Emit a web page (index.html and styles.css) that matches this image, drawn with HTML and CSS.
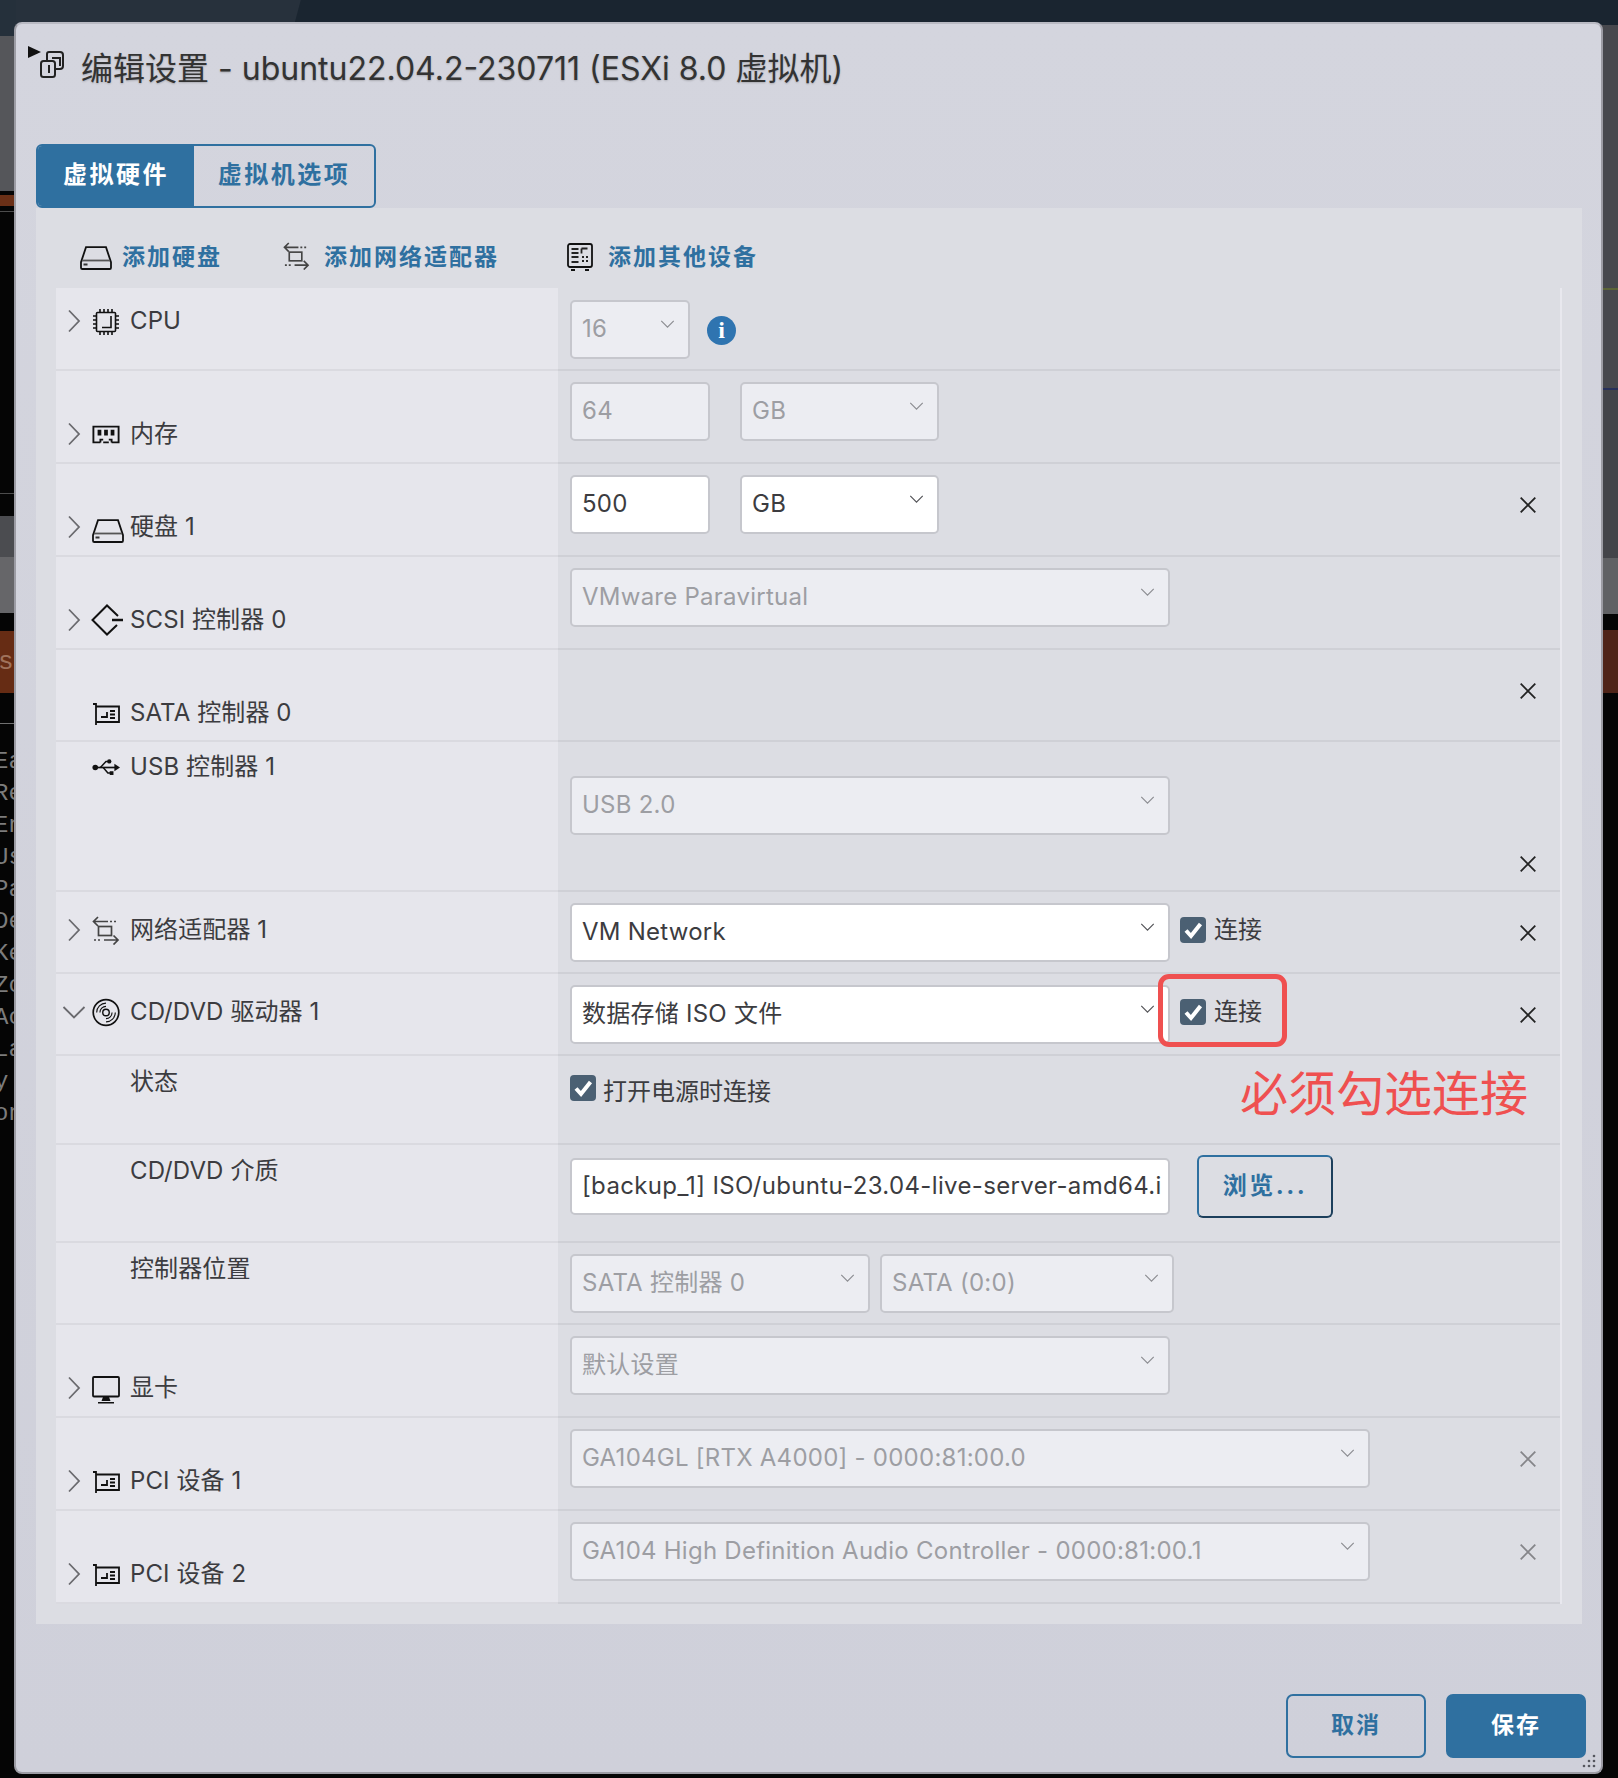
FILE: index.html
```html
<!DOCTYPE html>
<html lang="zh">
<head>
  <meta charset="UTF-8" />
  <title>编辑设置</title>
  <link rel="stylesheet" href="styles.css">
</head>
<body>
  <svg class="defs" width="0" height="0">
    <symbol id="chev-r" viewBox="0 0 14 24"><path d="M2 1.5 12 12 2 22.500" fill="none" stroke="#6a6a6e" stroke-width="1.800"/></symbol>
    <symbol id="chev-d" viewBox="0 0 24 14"><path d="M1.500 2 12 12.500 22.500 2" fill="none" stroke="#6a6a6e" stroke-width="1.800"/></symbol>
    <symbol id="drop" viewBox="0 0 16 9"><path d="M1 1 8 8 15 1" fill="none" stroke="currentColor" stroke-width="1.400"/></symbol>
    <symbol id="close" viewBox="0 0 16 16"><path d="M.7.7 15.300 15.300M15.300.7.7 15.300" fill="none" stroke="currentColor" stroke-width="1.800"/></symbol>
    <symbol id="i-disk" viewBox="0 0 32 24" preserveAspectRatio="none"><path d="M6 1.200h20l5 15v5.500a1.300 1.300 0 0 1-1.300 1.300H2.300A1.300 1.300 0 0 1 1 21.700v-5.500z" fill="none" stroke="#111" stroke-width="1.800"/><path d="M2 14.500h28" stroke="#555" stroke-width="1.800"/><path d="M3.500 18.500h4" stroke="#333" stroke-width="2"/></symbol>
    <symbol id="i-net" viewBox="0 0 28 29"><g fill="none" stroke="#444" stroke-width="1.700"><path d="M2 5.500h14M6 1 1.500 5.500 6 10"/><path d="M18 5.500h6" stroke-dasharray="2 2"/><rect x="6.500" y="10.500" width="13" height="9"/><path d="M12 24h14M21.500 19.500 26 24l-4.500 4.500"/><path d="M2 24h8" stroke-dasharray="2 2"/></g></symbol>
    <symbol id="i-other" viewBox="0 0 26 28"><rect x="1" y="1" width="24" height="23" rx="2" fill="none" stroke="#111" stroke-width="1.800"/><path d="M4 27h4M18 27h4" stroke="#111" stroke-width="2"/><path d="M4.500 6h7M4.500 10h7M4.500 14h7M4.500 19h7M14.500 5.500h6M14.500 5.500v5" stroke="#222" stroke-width="1.800" fill="none"/><path d="M15 14h2M19 14h2M15 18h2M19 18h2" stroke="#222" stroke-width="2"/></symbol>
    <symbol id="i-cpu" viewBox="0 0 28 28"><g fill="none" stroke="#111" stroke-width="1.600"><rect x="4.500" y="4.500" width="19" height="19" rx="1"/><path d="M19 8v11.500H10"/><path d="M8 1v3M12 1v3M16 1v3M20 1v3M8 24v3M12 24v3M16 24v3M20 24v3M1 8h3M1 12h3M1 16h3M1 20h3M24 8h3M24 12h3M24 16h3M24 20h3"/></g></symbol>
    <symbol id="i-mem" viewBox="0 0 30 20"><g fill="none" stroke="#111" stroke-width="2"><path d="M9 18.500H1.500V1.500h27v17H21M12 18.500h6"/><path d="M21 18.500v-3h-3M9 18.500v-3h3"/></g><path d="M6 5h4v6H6zM13 5h4v6h-4zM20 5h4v6h-4z" fill="#111"/></symbol>
    <symbol id="i-scsi" viewBox="0 0 32 32"><path d="M27 12 16 1.500 1.500 16 16 30.500 26 21" fill="none" stroke="#111" stroke-width="2"/><path d="M21 16h11" stroke="#111" stroke-width="2.500"/></symbol>
    <symbol id="i-card" viewBox="0 0 28 24"><g fill="none" stroke="#111" stroke-width="1.800"><path d="M1 2h3v21"/><path d="M4 4.500h23v15.500H4"/><path d="M9 15h6v-5M18 9h5M18 12.500h5M18 16h5"/></g></symbol>
    <symbol id="i-usb" viewBox="0 0 30 20"><path d="M2 10h24" stroke="#111" stroke-width="1.800"/><circle cx="3.500" cy="10" r="3" fill="#111"/><path d="M24 6l6 4-6 4z" fill="#111"/><path d="M9 10l6-6.500h3M12 10l5 6h3" fill="none" stroke="#111" stroke-width="1.600"/><circle cx="18.500" cy="3.500" r="2.300" fill="#111"/><rect x="19" y="14" width="4" height="4" fill="#111"/></symbol>
    <symbol id="i-disc" viewBox="0 0 30 30"><g fill="none" stroke="#111"><circle cx="15" cy="15" r="13.700" stroke-width="1.800"/><circle cx="15" cy="15" r="3.500" stroke-width="1.500"/><path d="M5 15A10 10 0 0 1 15 5M8.500 15A6.500 6.500 0 0 1 15 8.500M25 15A10 10 0 0 1 15 25M21.500 15A6.500 6.500 0 0 1 15 21.500" stroke-width="1.200"/></g></symbol>
    <symbol id="i-screen" viewBox="0 0 28 28"><rect x="1" y="1" width="26" height="19.500" rx="1" fill="none" stroke="#111" stroke-width="1.800"/><path d="M11 21h6l1.500 4h-9z" fill="#111"/><path d="M6 26h16v1.500H6z" fill="#111"/></symbol>
  </svg>

  <div class="backdrop">
    <div class="top-band"></div>
    <div class="strip strip-left">
      <div class="b-top-left"></div>
      <div class="b-grey"></div>
      <div class="b-brown-thin"></div>
      <div class="b-line b-line-a"></div>
      <div class="b-line b-line-b"></div>
      <div class="b-grey-dark"></div>
      <div class="b-grey-light"></div>
      <div class="b-brown">sy</div>
      <div class="b-line b-line-c"></div>
      <pre class="b-term">Ea
Re
En
Us
Pa
De
Ke
Zo
Ac
La
y
on</pre>
    </div>
    <div class="strip strip-right">
      <div class="r-top"></div>
      <div class="r-panel"></div>
      <div class="r-mark r-green"></div>
      <div class="r-panel r-panel-b"></div>
      <div class="r-mark r-blue"></div>
      <div class="r-panel r-panel-c"></div>
      <div class="r-light"></div>
      <div class="r-brown"></div>
    </div>
  </div>

  <div class="dialog">
    <div class="marker"></div>
    <div class="dialog-head">
      <svg class="head-icon" viewBox="0 0 24 27"><g fill="none" stroke="#222" stroke-width="2"><path d="M7 10V3a2 2 0 0 1 2-2h11v0a3 3 0 0 1 3 3v11a3 3 0 0 1-3 3h-6"/><rect x="1" y="10" width="14" height="16" rx="2.500"/><path d="M12 7h8v8"/><path d="M9 14v8"/></g></svg>
      <h1>编辑设置 - ubuntu22.04.2-230711 (ESXi 8.0 虚拟机)</h1>
    </div>

    <div class="tabs">
      <div class="tab tab-active">虚拟硬件</div>
      <div class="tab">虚拟机选项</div>
    </div>

    <div class="panel">
      <div class="actions">
        <a class="action action-disk"><svg class="a-disk" width="32" height="24"><use href="#i-disk"/></svg>添加硬盘</a>
        <a class="action action-net"><svg class="a-net" width="29" height="28"><use href="#i-net"/></svg>添加网络适配器</a>
        <a class="action action-other"><svg class="a-other" width="26" height="28"><use href="#i-other"/></svg>添加其他设备</a>
      </div>

      <div class="table">
        <div class="row">
          <div class="label label-top"><span class="chev"><svg width="14" height="24"><use href="#chev-r"/></svg></span><svg class="icon ic-cpu"><use href="#i-cpu"/></svg>CPU</div>
          <div class="value value-cpu">
            <div class="field off w-cpu"><span>16</span><svg class="drop" width="15" height="8"><use href="#drop"/></svg></div>
            <span class="info">i</span>
          </div>
        </div>

        <div class="row">
          <div class="label label-low"><span class="chev"><svg width="14" height="24"><use href="#chev-r"/></svg></span><svg class="icon ic-mem"><use href="#i-mem"/></svg>内存</div>
          <div class="value tall">
            <div class="field off w-num"><span>64</span></div>
            <div class="field off w-unit"><span>GB</span><svg class="drop" width="15" height="8"><use href="#drop"/></svg></div>
          </div>
        </div>

        <div class="row">
          <div class="label label-low"><span class="chev"><svg width="14" height="24"><use href="#chev-r"/></svg></span><svg class="icon ic-disk"><use href="#i-disk"/></svg>硬盘 1</div>
          <div class="value tall">
            <div class="field w-num"><span>500</span></div>
            <div class="field w-unit"><span>GB</span><svg class="drop" width="15" height="8"><use href="#drop"/></svg></div>
            <svg class="close" width="16" height="16"><use href="#close"/></svg>
          </div>
        </div>

        <div class="row">
          <div class="label label-low"><span class="chev"><svg width="14" height="24"><use href="#chev-r"/></svg></span><svg class="icon ic-scsi"><use href="#i-scsi"/></svg>SCSI 控制器 0</div>
          <div class="value tall">
            <div class="field off w-wide"><span>VMware Paravirtual</span><svg class="drop" width="15" height="8"><use href="#drop"/></svg></div>
          </div>
        </div>

        <div class="row">
          <div class="label label-low"><span class="chev"></span><svg class="icon ic-card"><use href="#i-card"/></svg>SATA 控制器 0</div>
          <div class="value tall value-empty">
            <svg class="close" width="16" height="16"><use href="#close"/></svg>
          </div>
        </div>

        <div class="row">
          <div class="label label-usb"><span class="chev"></span><svg class="icon ic-usb"><use href="#i-usb"/></svg>USB 控制器 1</div>
          <div class="value value-usb">
            <div class="field off w-wide field-usb"><span>USB 2.0</span><svg class="drop" width="15" height="8"><use href="#drop"/></svg></div>
            <svg class="close close-low" width="16" height="16"><use href="#close"/></svg>
          </div>
        </div>

        <div class="row">
          <div class="label label-mid"><span class="chev"><svg width="14" height="24"><use href="#chev-r"/></svg></span><svg class="icon ic-net"><use href="#i-net"/></svg>网络适配器 1</div>
          <div class="value">
            <div class="field w-wide"><span>VM Network</span><svg class="drop" width="15" height="8"><use href="#drop"/></svg></div>
            <label class="check check-row"><span class="box"><svg width="26" height="26" viewBox="0 0 26 26"><path d="M6 13.500 11 19 20.500 7" fill="none" stroke="#fff" stroke-width="4"/></svg></span>连接</label>
            <svg class="close" width="16" height="16"><use href="#close"/></svg>
          </div>
        </div>

        <div class="row">
          <div class="label label-mid"><span class="chev"><svg width="24" height="14"><use href="#chev-d"/></svg></span><svg class="icon ic-disc"><use href="#i-disc"/></svg>CD/DVD 驱动器 1</div>
          <div class="value">
            <div class="field w-wide"><span>数据存储 ISO 文件</span><svg class="drop" width="15" height="8"><use href="#drop"/></svg></div>
            <label class="check check-row"><span class="box"><svg width="26" height="26" viewBox="0 0 26 26"><path d="M6 13.500 11 19 20.500 7" fill="none" stroke="#fff" stroke-width="4"/></svg></span>连接</label>
            <svg class="close" width="16" height="16"><use href="#close"/></svg>
          </div>
        </div>

        <div class="row">
          <div class="label label-sub">状态</div>
          <div class="value value-status">
            <label class="check check-power"><span class="box"><svg width="26" height="26" viewBox="0 0 26 26"><path d="M6 13.500 11 19 20.500 7" fill="none" stroke="#fff" stroke-width="4"/></svg></span><span class="check-text">打开电源时连接</span></label>
          </div>
        </div>

        <div class="row">
          <div class="label label-sub">CD/DVD 介质</div>
          <div class="value value-iso">
            <div class="field w-wide field-iso"><span>[backup_1] ISO/ubuntu-23.04-live-server-amd64.i</span></div>
            <button class="btn-browse">浏览...</button>
          </div>
        </div>

        <div class="row">
          <div class="label label-sub">控制器位置</div>
          <div class="value">
            <div class="field off w-half"><span>SATA 控制器 0</span><svg class="drop" width="15" height="8"><use href="#drop"/></svg></div>
            <div class="field off w-half2"><span>SATA (0:0)</span><svg class="drop" width="15" height="8"><use href="#drop"/></svg></div>
          </div>
        </div>

        <div class="row">
          <div class="label label-low"><span class="chev"><svg width="14" height="24"><use href="#chev-r"/></svg></span><svg class="icon ic-screen"><use href="#i-screen"/></svg>显卡</div>
          <div class="value tall">
            <div class="field off w-wide"><span>默认设置</span><svg class="drop" width="15" height="8"><use href="#drop"/></svg></div>
          </div>
        </div>

        <div class="row">
          <div class="label label-low"><span class="chev"><svg width="14" height="24"><use href="#chev-r"/></svg></span><svg class="icon ic-card"><use href="#i-card"/></svg>PCI 设备 1</div>
          <div class="value tall">
            <div class="field off w-long"><span>GA104GL [RTX A4000] - 0000:81:00.0</span><svg class="drop" width="15" height="8"><use href="#drop"/></svg></div>
            <svg class="close close-off" width="16" height="16"><use href="#close"/></svg>
          </div>
        </div>

        <div class="row">
          <div class="label label-low"><span class="chev"><svg width="14" height="24"><use href="#chev-r"/></svg></span><svg class="icon ic-card"><use href="#i-card"/></svg>PCI 设备 2</div>
          <div class="value tall">
            <div class="field off w-long"><span>GA104 High Definition Audio Controller - 0000:81:00.1</span><svg class="drop" width="15" height="8"><use href="#drop"/></svg></div>
            <svg class="close close-off" width="16" height="16"><use href="#close"/></svg>
          </div>
        </div>
      </div>
    </div>

    <div class="dialog-foot">
      <button class="btn">取消</button>
      <button class="btn btn-primary">保存</button>
    </div>
    <svg class="grip" width="14" height="14" viewBox="0 0 14 14"><g fill="#55565e"><circle cx="12" cy="2" r="1.300"/><circle cx="7" cy="7" r="1.300"/><circle cx="12" cy="7" r="1.300"/><circle cx="2" cy="12" r="1.300"/><circle cx="7" cy="12" r="1.300"/><circle cx="12" cy="12" r="1.300"/></g></svg>

    <div class="note-box"></div>
    <div class="note-text">必须勾选连接</div>
  </div>
</body>
</html>
```

FILE: styles.css
```css
* {
  box-sizing: border-box;
}

html, body {
  height: 100%;
}

body {
  margin: 0;
  background: #050505;
  font-family: "Inter", "Noto Sans CJK SC", sans-serif;
  color: #3c3c40;
  overflow: hidden;
  position: relative;
}

.defs {
  position: absolute;
}

/* what shows round the dialog */
.backdrop {
  position: absolute;
  inset: 0;
  background: #050505;
}

.top-band {
  height: 25px;
  background: linear-gradient(105deg, #27313c 0 290px, #1a2530 291px);
}

.strip {
  position: absolute;
  top: 0;
  overflow: hidden;
}

.strip-left {
  left: 0;
  width: 16px;
  height: 1140px;
}

.strip-right {
  right: 0;
  width: 20px;
  height: 700px;
}

.b-top-left {
  height: 36px;
  background: #25303b;
}

.b-grey {
  height: 155px;
  background: #55565a;
}

.b-brown-thin {
  height: 11px;
  margin-top: 4px;
  background: #6b3017;
}

.b-line {
  height: 1px;
  background: #4c4c4c;
}

.b-line-a {
  margin-top: 5px;
}

.b-line-b {
  margin-top: 281px;
}

.b-grey-dark {
  height: 41px;
  margin-top: 22px;
  background: #4b4c50;
}

.b-grey-light {
  height: 56px;
  background: #666669;
}

.b-brown {
  height: 62px;
  margin-top: 18px;
  background: #662c14;
  color: #a0735c;
  font: 26px/62px "Liberation Mono", monospace;
  text-indent: -2px;
}

.b-line-c {
  margin-top: 30px;
  background: #707070;
}

.b-term {
  margin: 22px 0 0 -6px;
  font: 24px/32px "Liberation Mono", monospace;
  color: #7c7c7c;
}

.r-top {
  height: 25px;
  background: #1a2530;
}

.r-panel {
  height: 263px;
  background: #47484d;
}

.r-panel-b {
  height: 98px;
}

.r-panel-c {
  height: 168px;
  background: #434449;
}

.r-mark {
  height: 2px;
}

.r-green {
  background: #5c6437;
}

.r-blue {
  background: #27305a;
}

.r-light {
  height: 56px;
  background: #606164;
}

.r-brown {
  height: 63px;
  margin-top: 16px;
  background: #4f2418;
}

.dialog {
  position: absolute;
  left: 14px;
  top: 22px;
  width: 1589px;
  height: 1752px;
  border: 2px solid #9c9ca4;
  border-top-color: #b9bac3;
  border-radius: 8px;
  background: linear-gradient(#d4d5de, #cfd0da);
}

.dialog-head {
  height: 120px;
  padding: 27px 0 0 24px;
  display: flex;
  align-items: flex-start;
  gap: 17px;
}

.marker {
  position: absolute;
  left: 12px;
  top: 22px;
  border-left: 13px solid #111;
  border-top: 6.500px solid transparent;
  border-bottom: 6.500px solid transparent;
}

.head-icon {
  width: 24px;
  height: 27px;
}

h1 {
  margin: 0;
  font-size: 32px;
  font-weight: 400;
  line-height: 36px;
  color: #333;
  text-shadow: 0 1px 2px rgba(0, 0, 0, 0.2);
  white-space: nowrap;
}

.tabs {
  display: flex;
  width: 340px;
  height: 64px;
  margin-left: 20px;
  border: 2px solid #2f70a0;
  border-radius: 6px;
  overflow: hidden;
}

.tab {
  flex: 1;
  font-size: 24px;
  font-weight: 700;
  letter-spacing: 2.500px;
  line-height: 58px;
  text-align: center;
  color: #2f70a0;
}

.tab-active {
  flex: 0 0 156px;
  background: #2f70a0;
  color: #fff;
}

.panel {
  width: 1546px;
  height: 1416px;
  margin-left: 20px;
  background: #dcdde3;
  padding: 0 22px 0 20px;
}

.actions {
  height: 80px;
  display: flex;
  align-items: flex-start;
  padding-top: 33px;
}

.action {
  display: flex;
  align-items: center;
  gap: 10px;
  height: 28px;
  font-size: 23px;
  font-weight: 700;
  letter-spacing: 2px;
  color: #2f70a0;
  white-space: nowrap;
}

.a-disk {
  margin-top: 6px;
}

.a-net {
  margin-top: 1px;
}

.a-other {
  margin-top: 3px;
}

.action-disk {
  margin-left: 24px;
}

.action-net {
  margin-left: 60px;
  gap: 13px;
}

.action-other {
  margin-left: 68px;
  gap: 15px;
}

.table {
  width: 1506px;
  border-right: 2px solid #e8e8ee;
}

.row {
  display: grid;
  grid-template-columns: 502px 1fr;
}

.label {
  display: flex;
  align-items: flex-start;
  background: #e6e6ec;
  border-bottom: 2px solid #dadae0;
  font-size: 24px;
  line-height: 28px;
  letter-spacing: 0.100px;
  white-space: nowrap;
  color: #3c3c40;
}

.label-top {
  padding-top: 19px;
}

.label-mid {
  padding-top: 24px;
}

.label-low {
  padding-top: 49px;
}

.label-usb {
  padding-top: 11px;
}

.label-sub {
  padding: 12px 0 0 74px;
}

.chev {
  flex: 0 0 36px;
  height: 28px;
  display: flex;
  align-items: center;
  justify-content: center;
}

/* icons share a 28px slot, taller ones hang lower than the text */
.icon {
  flex: 0 0 28px;
  width: 28px;
  margin-right: 10px;
  overflow: visible;
}

.ic-cpu {
  height: 28px;
  margin-top: 1px;
}

.ic-mem {
  height: 19px;
  margin-top: 5px;
}

.ic-disk {
  flex-basis: 32px;
  width: 32px;
  height: 24px;
  margin: 6px 6px 0 0;
}

.ic-scsi {
  flex-basis: 32px;
  width: 32px;
  height: 32px;
  margin: -2px 7px 0 -1px;
}

.ic-card {
  height: 24px;
  margin-top: 3px;
}

.ic-usb {
  height: 19px;
  margin-top: 5px;
}

.ic-net {
  height: 29px;
  margin-top: 0;
}

.ic-disc {
  height: 29px;
  margin-top: 0;
}

.ic-screen {
  height: 28px;
  margin-top: 2px;
}

.value {
  display: flex;
  align-items: flex-start;
  padding: 11px 24px 10px 12px;
  border-bottom: 2px solid #cfd0d6;
}

.value-cpu {
  padding-top: 12px;
}

.tall {
  padding-bottom: 21px;
}

.value-empty {
  height: 92px;
}

.value-usb {
  height: 150px;
}

.value-status {
  height: 89px;
  padding-top: 19px;
}

.value-iso {
  height: 98px;
  padding-top: 10px;
}

.field {
  height: 59px;
  display: flex;
  align-items: center;
  justify-content: space-between;
  padding: 0 13px 2px 10px;
  background: #fff;
  border: 2px solid #c6c7cd;
  border-radius: 5px;
  font-size: 24px;
  letter-spacing: 0.250px;
  color: #3c3c40;
  white-space: nowrap;
  overflow: hidden;
  flex: 0 0 auto;
}

.field span {
  line-height: 28px;
}

.off {
  background: #ecedf2;
  color: #9d9ea3;
}

.drop {
  color: #55565a;
  margin-top: -10px;
  flex: 0 0 auto;
}

.off .drop {
  color: #8d8e93;
}

.w-cpu {
  width: 120px;
}

.w-num {
  width: 140px;
}

.w-unit {
  width: 199px;
  margin-left: 30px;
}

.w-wide {
  width: 600px;
}

.w-half {
  width: 300px;
}

.w-half2 {
  width: 294px;
  margin-left: 10px;
}

.w-long {
  width: 800px;
}

.field-usb {
  margin-top: 23px;
}

.field-iso {
  margin-top: 3px;
  height: 57px;
  padding-right: 8px;
  letter-spacing: 0.350px;
}

.info {
  width: 29px;
  height: 29px;
  margin: 16px 0 0 17px;
  border-radius: 50%;
  background: #2f74b0;
  color: #fff;
  font: 700 24px/29px "Liberation Serif", serif;
  text-align: center;
}

.close {
  margin: 22px 0 0 auto;
  color: #222;
  flex: 0 0 auto;
}

.close-low {
  margin-top: 103px;
}

.close-off {
  color: #858589;
}

.check {
  display: flex;
  align-items: flex-start;
  gap: 8px;
  font-size: 24px;
  line-height: 26px;
  color: #3c3c40;
}

.check-row {
  margin: 14px 0 0 10px;
}

.check-power {
  gap: 7px;
}

.check-text {
  margin-top: 4px;
}

.box {
  width: 26px;
  height: 26px;
  border-radius: 4px;
  background: #4b6073;
  flex: 0 0 auto;
}

.btn-browse {
  width: 136px;
  height: 63px;
  margin-left: 27px;
  padding-bottom: 3px;
  background: transparent;
  border: 2px solid;
  border-color: #2f70a0 #1c3f5c #1c3f5c #2f70a0;
  border-radius: 6px;
  font: 700 24px/28px "Inter", "Noto Sans CJK SC", sans-serif;
  letter-spacing: 2.500px;
  color: #2f70a0;
}

.dialog-foot {
  display: flex;
  justify-content: flex-end;
  gap: 20px;
  padding: 70px 15px 0 0;
}

.btn {
  width: 140px;
  height: 64px;
  padding-bottom: 3px;
  background: transparent;
  border: 2px solid #2f70a0;
  border-radius: 7px;
  font: 700 23px/28px "Inter", "Noto Sans CJK SC", sans-serif;
  letter-spacing: 2px;
  color: #2f70a0;
}

.btn-primary {
  background: #2f70a0;
  color: #fff;
}

.grip {
  position: absolute;
  right: 5px;
  bottom: 4px;
}

/* red annotation drawn on the screenshot */
.note-box {
  position: absolute;
  left: 1142px;
  top: 950px;
  width: 129px;
  height: 73px;
  border: 5px solid #ef5050;
  border-radius: 11px;
}

.note-text {
  position: absolute;
  left: 1224px;
  top: 1038px;
  font-size: 48px;
  line-height: 64px;
  color: #ef5050;
  white-space: nowrap;
}
```
